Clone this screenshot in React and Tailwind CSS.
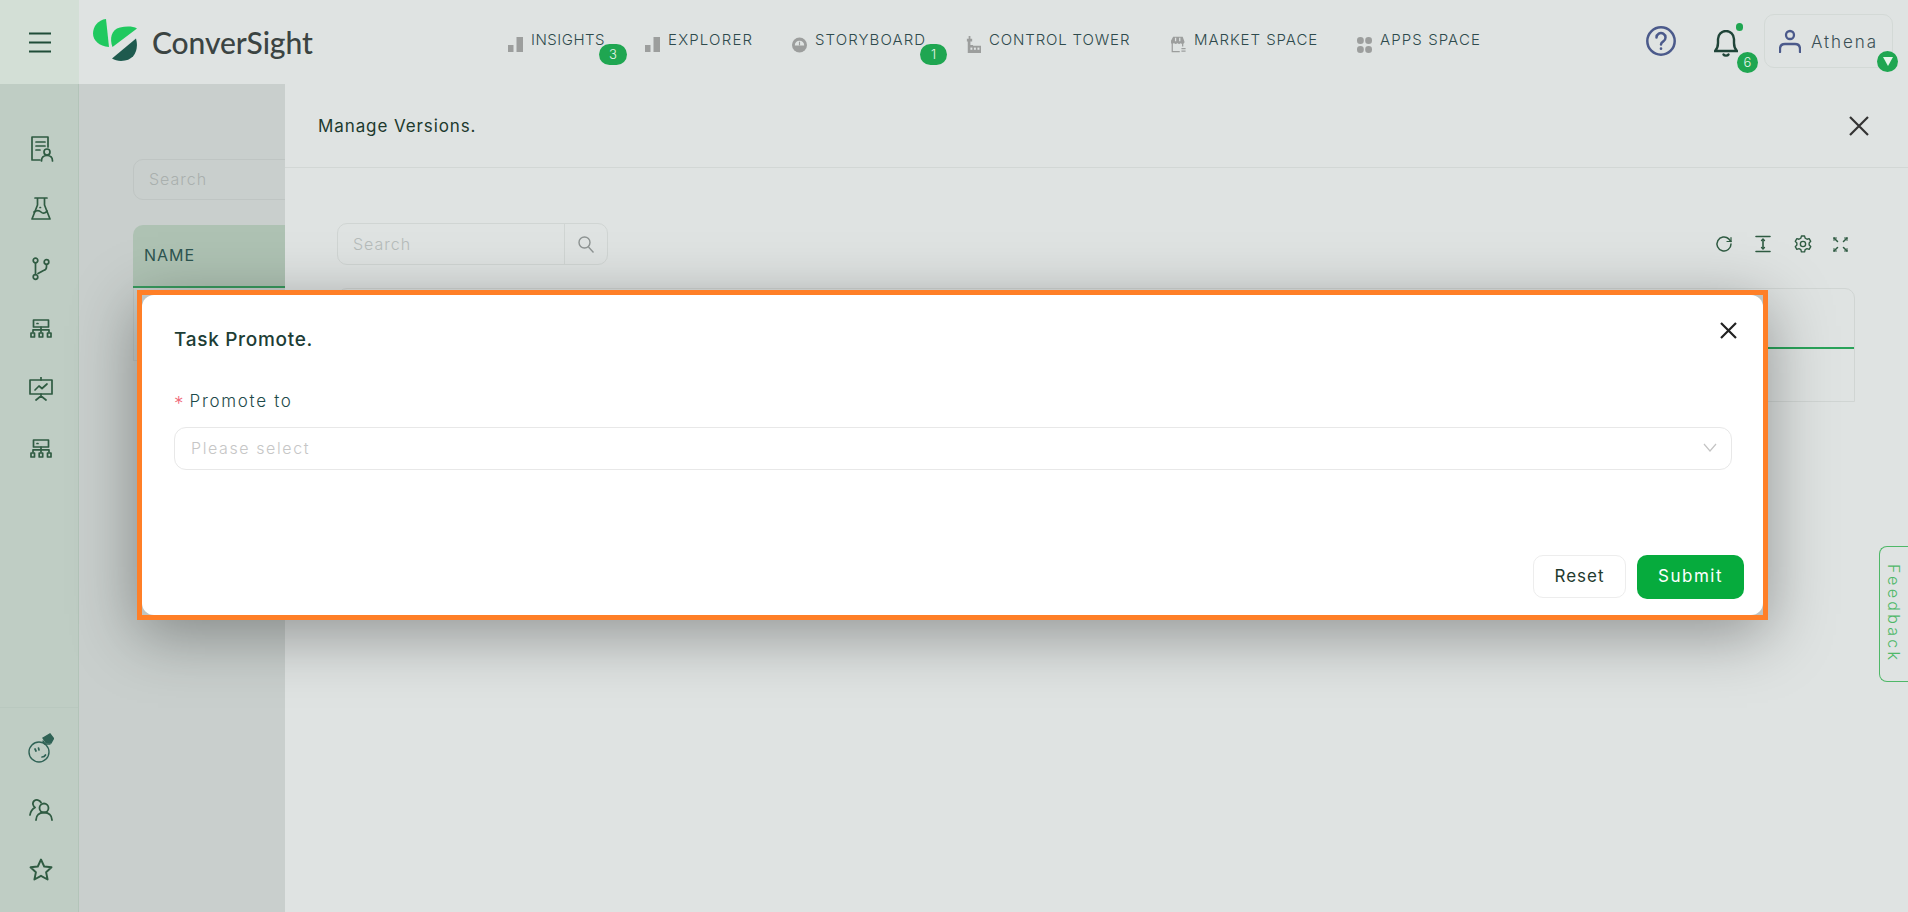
import React from "react";

const S = ({ w = 24, h = 24, vb = "0 0 24 24", sw = 1.8, c = "#2f5b42", children }) => (
  <svg width={w} height={h} viewBox={vb} fill="none" stroke={c} strokeWidth={sw} strokeLinecap="round" strokeLinejoin="round">
    {children}
  </svg>
);

const Bars = () => (
  <svg width="15" height="15" viewBox="0 0 15 15" fill="#9c9e9d"><rect x="0" y="8" width="5.500" height="7" /><rect x="8.500" y="0" width="6.500" height="15" /></svg>
);
const Gauge = () => (
  <svg width="16" height="17" viewBox="0 0 16 17" fill="#9c9e9d"><circle cx="8" cy="9" r="8" /><path d="M3 9.500a5 5 0 0 1 10 0z" fill="#dfe3e2" /><path d="M7.400 5.500h1.200v4H7.400z" /></svg>
);
const Factory = () => (
  <svg width="17" height="19" viewBox="0 0 17 19" fill="#9c9e9d"><path d="M1 3h2V0h2v3h2v3H5v4h3v1h9v8H2V6H1z" /><rect x="5" y="13" width="2.200" height="2.500" fill="#dfe3e2" /><rect x="9" y="13" width="2.200" height="2.500" fill="#dfe3e2" /><rect x="13" y="13" width="2.200" height="2.500" fill="#dfe3e2" /></svg>
);
const Store = () => (
  <svg width="18" height="19" viewBox="0 0 18 19" fill="none" stroke="#9c9e9d" strokeWidth="1.500"><path d="M1.500 7v11h9" /><path d="M14 8v4" /><path d="M3 1h10.500l2 5.500c-.5 2-3 2-3.800 0c-1 2-3 2-4 0c-1 2-3.200 2-4 0c-1 2-3.500 1.500-3.700 0z" fill="#9c9e9d" /><path d="M5.500 1.500v4M10.500 1.500v4" stroke="#dfe3e2" /><path d="M12.500 14.500h5M12.500 17.500h5" /></svg>
);
const Dots = () => (
  <svg width="15" height="16" viewBox="0 0 15 16" fill="#9c9e9d"><rect x="0" y="0" width="6.800" height="7" rx="3.300" /><rect x="8.200" y="0" width="6.800" height="7" rx="3.300" /><rect x="0" y="9" width="6.800" height="7" rx="3.300" /><rect x="8.200" y="9" width="6.800" height="7" rx="3.300" /></svg>
);

const Network = () => (
  <S w={22} h={20} vb="0 0 22 20" sw={1.7}>
    <rect x="3.500" y="1" width="15" height="7" /><path d="M7 4.500h1" /><path d="M11 8v5M3 13v-2.200h16V13" />
    <rect x="1" y="14" width="3.500" height="4" /><rect x="9.200" y="14" width="3.500" height="4" /><rect x="17.500" y="14" width="3.500" height="4" />
  </S>
);

const nav = [
  { icon: <Bars />, label: "INSIGHTS", w: "w-[74px]", t: "tracking-[0.5px]", badge: "3", pos: "left-[91px] w-[28px]" },
  { icon: <Bars />, label: "EXPLORER", w: "w-[84px]", t: "tracking-[1.2px]" },
  { icon: <Gauge />, label: "STORYBOARD", w: "w-[111px]", t: "tracking-[1.1px]", badge: "1", pos: "left-[128px] w-[27px]" },
  { icon: <Factory />, label: "CONTROL TOWER", w: "w-[142px]", t: "tracking-[0.85px]" },
  { icon: <Store />, label: "MARKET SPACE", w: "w-[123px]", t: "tracking-[0.95px]" },
  { icon: <Dots />, label: "APPS SPACE", w: "w-[98px]", t: "tracking-[1.1px]" },
];

const sideTop = [
  <S w={26} h={28} vb="0 0 26 28" sw={1.7}>
    <path d="M12 25H4V2h16v10" /><path d="M8 7h9M8 11h9M8 15h4" /><circle cx="19" cy="17" r="3" /><path d="M13.500 26c0-3.500 2-5.500 5.500-5.500s5.500 2 5.500 5.500" />
  </S>,
  <S w={22} h={24} vb="0 0 22 24" sw={1.7}>
    <path d="M5 1h12M7.500 1v7L2 22h18L14.500 8V1" /><path d="M4 15c3-2 5-2 7 0s5 1 6-1" /><path d="M10 10.500h.5" />
  </S>,
  <S w={20} h={24} vb="0 0 20 24" sw={1.7}>
    <circle cx="4.500" cy="3.500" r="2.300" /><circle cx="15.500" cy="5" r="2.300" /><circle cx="4.500" cy="20" r="2.300" /><path d="M4.500 6v11.500M15.500 7.500V10c0 2-1 3-3 3.500L7 16.500" />
  </S>,
  <Network />,
  <S w={24} h={24} vb="0 0 24 24" sw={1.7}>
    <path d="M12 0v3" /><rect x="1" y="3" width="22" height="14" /><path d="M6 13l4-4 3 2.500L18 7" /><path d="M12 17v2M7 23l5-4 5 4" />
  </S>,
  <Network />,
];

const sideBottom = [
  <svg width="26" height="30" viewBox="0 0 26 30" fill="none" stroke="#2f6255" strokeWidth="1.400" strokeLinecap="round">
    <circle cx="11" cy="19" r="10" /><path d="M7 16l1 2M10.500 15l.5 2M14 24c1.500 0 3-1 3.500-2" strokeWidth="1.700" />
    <path d="M15 5l7-4 3.500 4.500L23 10l-5-.5z" fill="#2f6255" /><path d="M15 8l2 3h5" />
  </svg>,
  <S w={24} h={24} vb="0 0 24 24" sw={1.8}>
    <circle cx="15" cy="11" r="4.500" /><path d="M7 23c0-5 3.500-7.500 8-7.500s8 2.500 8 7.500" /><path d="M12 5.500A4.500 4.500 0 0 0 5 4c-2 2-1 5 1 6.500C3.500 12 1.500 14 1 18" />
  </S>,
  <S w={24} h={23} vb="0 0 24 23" sw={1.9}>
    <path d="M12 1.500l3.200 7 7.300.8-5.400 5 1.500 7.200-6.600-3.700-6.600 3.700 1.500-7.200-5.400-5 7.300-.8z" />
  </S>,
];

const Pill = ({ className, children }) => (
  <span className={`absolute flex items-center justify-center rounded-full bg-[#1fa651] text-[13px] tracking-normal text-[#e6f5ea] font-['Inter',sans-serif] font-light ${className}`}>{children}</span>
);

export default function App() {
  return (
    <div className="relative flex h-[912px] w-[1908px] flex-col overflow-hidden bg-[#dfe3e2] font-['Inter',sans-serif] text-[#24463a]">
      {/* top bar */}
      <header className="flex h-[84px] shrink-0 items-stretch bg-[#dfe3e2]">
        <div className="flex w-[79px] items-center justify-center bg-[#d3dfd6]">
          <svg width="22" height="21" viewBox="0 0 22 21" stroke="#1f4d38" strokeWidth="2"><path d="M0 1.500h22M0 10.500h22M0 19.500h22" /></svg>
        </div>
        <div className="ml-[14px] flex w-[415px] items-start pt-[19px]">
          <svg width="45" height="42" viewBox="0 0 45 42">
            <path d="M13 0C5 1 0 7.500 0 14.500C0 21.500 6 27 16 28Z" fill="#20c95f" />
            <path d="M19.500 28C16.500 20 18 10.500 27 8.500C33 7 40 7 44 9.500Z" fill="#20c95f" />
            <path d="M43 19.500C46 30 42 42 28 42C24.500 42 21.500 41 19 39.500Z" fill="#1e5a4e" />
          </svg>
          <span className="ml-[14px] mt-[5px] font-['Lato',sans-serif] text-[30px] font-medium leading-[36px] tracking-[-0.1px] text-[#3b4442]">ConverSight</span>
        </div>
        <nav className="flex h-[84px] items-start gap-[40px] pt-[31px] text-[15px] font-light text-[#2e4a4c]">
          {nav.map((n) => (
            <div key={n.label} className="relative flex h-[18px] items-center gap-[8px]">
              <span className="mt-[9px] flex w-[15px] shrink-0 justify-center">{n.icon}</span>
              <span className={`${n.w} ${n.t} whitespace-nowrap leading-[18px]`}>{n.label}</span>
              {n.badge && <Pill className={`top-[13px] h-[21px] ${n.pos}`}>{n.badge}</Pill>}
            </div>
          ))}
        </nav>
        <div className="ml-auto flex items-start pr-[15px]">
          <div className="mt-[26px]">
            <svg width="30" height="30" viewBox="0 0 30 30" fill="none" stroke="#4b5a8b" strokeWidth="2.500" strokeLinecap="round">
              <circle cx="15" cy="15" r="13.700" /><path d="M10.500 11.500a4.500 4.500 0 1 1 6.800 3.900c-1.500.9-2.300 1.600-2.300 3.100" /><path d="M15 22.500v.3" strokeWidth="2.600" />
            </svg>
          </div>
          <div className="relative ml-[38px] mt-[30px] h-[28px] w-[24px]">
            <svg width="24" height="27" viewBox="0 0 24 27" fill="none" stroke="#1f4438" strokeWidth="2.400" strokeLinecap="round">
              <path d="M1 21h22c-2-2-3-4-3-8V9a8 8 0 0 0-16 0v4c0 4-1 6-3 8z" /><path d="M9.500 24.500c1 1.500 4 1.500 5 0" />
            </svg>
            <span className="absolute left-[22px] top-[-7px] h-[8px] w-[7px] rounded-full bg-[#1fa651]" />
            <Pill className="left-[23px] top-[22px] h-[21px] w-[21px]">6</Pill>
          </div>
          <div className="relative ml-[26px] mt-[14px] flex h-[54px] w-[129px] items-center rounded-[10px] border border-[#d3d9d6] pl-[14px]">
            <svg width="22" height="24" viewBox="0 0 22 24" fill="none" stroke="#4b5a8b" strokeWidth="2.300" strokeLinecap="round">
              <circle cx="11" cy="6" r="4" /><path d="M1 23v-3c0-3 2-5 5-5h10c3 0 5 2 5 5v3" />
            </svg>
            <span className="ml-[10px] mt-[3px] text-[17px] font-light tracking-[1.900px] text-[#3a4f55]">Athena</span>
            <span className="absolute left-[112px] top-[36px] flex h-[21px] w-[21px] items-center justify-center rounded-full bg-[#1fa651]">
              <svg width="10" height="9" viewBox="0 0 10 9" fill="#e6f5ea"><path d="M0 0h10L5 9z" /></svg>
            </span>
          </div>
        </div>
      </header>

      <div className="flex min-h-0 flex-1">
        {/* sidebar */}
        <aside className="flex w-[79px] shrink-0 flex-col justify-between border-r border-[#b3c4b9] bg-[#bfcdc4]">
          <div className="flex flex-col pt-[35px]">
            {sideTop.map((ic, i) => (
              <div key={i} className="flex h-[60px] items-center justify-center pl-[3px]">{ic}</div>
            ))}
          </div>
          <div className="flex flex-col border-t border-[#b9c8bf] pb-[12px] pt-[9px]">
            {sideBottom.map((ic, i) => (
              <div key={i} className="flex h-[61px] items-center justify-center pl-[3px]">{ic}</div>
            ))}
          </div>
        </aside>

        {/* page behind drawer */}
        <main className="relative flex-1 bg-[#c9cfcd] pl-[54px] pt-[75px]">
          <div className="flex h-[41px] w-[300px] items-center rounded-[10px] border border-[#bfc5c3] pb-[2px] pl-[15px] text-[16px] font-light tracking-[1px] text-[#a9b0ae]">Search</div>
          <div className="mt-[25px] w-[300px] overflow-hidden rounded-t-[10px]">
            <div className="flex h-[63px] items-center border-b-[2px] border-[#389a5e] bg-[#aec2b3] pb-[2px] pl-[11px] text-[16px] tracking-[1px] text-[#2d5550]">NAME</div>
            <div className="h-[73px] border-x border-b border-[#bfc5c3]" />
          </div>

          {/* drawer */}
          <section className="absolute inset-y-0 left-[206px] right-0 bg-[#dfe3e2]">
            <div className="flex h-[84px] items-center justify-between border-b border-[#d2d7d5] pl-[33px] pr-[39px]">
              <h2 className="pt-[2px] text-[17px] font-normal tracking-[0.9px] text-[#1d3a2e]">Manage Versions.</h2>
              <svg width="20" height="20" viewBox="0 0 20 20" stroke="#333" strokeWidth="2.200"><path d="M1 1l18 18M19 1L1 19" /></svg>
            </div>
            <div className="pl-[52px] pr-[53px] pt-[55px]">
              <div className="flex h-[42px] items-center justify-between">
                <div className="flex h-[42px] w-[271px] rounded-[10px] border border-[#d0d5d3]">
                  <span className="flex flex-1 items-center pb-[1px] pl-[15px] text-[16px] font-light tracking-[1px] text-[#b6bcba]">Search</span>
                  <span className="flex w-[43px] items-center justify-center border-l border-[#d0d5d3]">
                    <svg width="16" height="17" viewBox="0 0 16 17" fill="none" stroke="#8e9493" strokeWidth="1.400"><circle cx="6.500" cy="6.500" r="5.500" /><path d="M10.500 11l5 5.500" /></svg>
                  </span>
                </div>
                <div className="flex items-center gap-[21.5px] pr-[7px]">
                  <S w={18} h={18} vb="0 0 18 18" sw={1.5}><path d="M16 9a7 7 0 1 1-2.200-5.100L16 6.500" /><path d="M16 2.500v4h-4" strokeWidth={1.200} /></S>
                  <S w={18} h={18} vb="0 0 18 18" sw={1.600}><path d="M2 1.500h14M2 16.500h14M9 4.500v9" /><path d="M7.500 5.500L9 4l1.500 1.500M7.500 12.500L9 14l1.500-1.500" strokeWidth={1.300} /></S>
                  <S w={18} h={18} vb="0 0 17 17" sw={1.300}><path d="M7 1h3l.5 2 1.800 1 2-.6 1.500 2.600-1.500 1.500v1.900l1.500 1.500-1.500 2.600-2-.6-1.800 1-.5 2H7l-.5-2-1.800-1-2 .6L1.200 11l1.500-1.500V7.600L1.200 6l1.500-2.600 2 .6 1.800-1z" /><circle cx="8.500" cy="8.500" r="2.500" /></S>
                  <S w={15} h={15} vb="0 0 15 15" sw={1.500}><path d="M1 1l3.500 3.500M14 1l-3.500 3.500M1 14l3.500-3.500M14 14l-3.500-3.500" /><path d="M1 1h2.500M1 1v2.500M14 1h-2.500M14 1v2.500M1 14h2.500M1 14v-2.500M14 14h-2.500M14 14v-2.500" strokeWidth={1} /></S>
                </div>
              </div>
              <div className="mt-[23px] h-[114px] rounded-t-[10px] border border-[#d0d5d3]">
                <div className="h-[60px] border-b-[2px] border-[#2aa35a]" />
              </div>
            </div>
          </section>
        </main>
      </div>

      {/* feedback tab */}
      <div className="absolute right-0 top-[546px] flex h-[136px] w-[29px] items-center justify-center rounded-l-[8px] border border-r-0 border-[#4fb868] [writing-mode:vertical-rl] text-[16px] font-light tracking-[3.300px] text-[#4fb868]">Feedback</div>

      {/* task promote dialog */}
      <div className="absolute left-[137px] top-[290px] h-[330px] w-[1631px] border-[5px] border-[#ff7f27] bg-[#bfc4c2] shadow-[0_15px_60px_rgba(0,0,0,0.35)]">
        <div className="relative flex h-full flex-col rounded-[12px] bg-white pl-[32px] pr-[31px] pt-[33px]">
          <h3 className="h-[24px] text-[19px] font-medium leading-[24px] tracking-[0.7px] text-[#1d3d35]">Task Promote.</h3>
          <button className="absolute right-[26px] top-[27px]" aria-label="Close">
            <svg width="17" height="17" viewBox="0 0 17 17" stroke="#222" strokeWidth="2.200"><path d="M1 1l15 15M16 1L1 16" /></svg>
          </button>
          <label className="mt-[38px] flex h-[24px] items-center text-[17px] font-light tracking-[1.700px] text-[#1d4a4a]">
            <span className="mr-[6px] mt-[4px] text-[19px] tracking-normal text-[#f06a7a]">*</span>Promote to
          </label>
          <div className="mt-[13px] flex h-[43px] items-center justify-between rounded-[12px] border border-[#e8e8e8] pb-[2px] pl-[16px] pr-[14px] text-[16px] font-light tracking-[1.600px] text-[#c6c6c6]">
            Please select
            <svg width="14" height="9" viewBox="0 0 14 9" fill="none" stroke="#c4c4c4" strokeWidth="1.200"><path d="M1 1l6 7 6-7" /></svg>
          </div>
          <div className="-mr-[12px] mt-[85px] flex items-start justify-end gap-[11px]">
            <button className="h-[43px] w-[93px] rounded-[10px] border border-[#ededed] bg-white text-[17px] font-normal tracking-[1px] text-[#1f3a2e]">Reset</button>
            <button className="h-[44px] w-[107px] rounded-[10px] bg-[#06ab3d] text-[17px] font-normal tracking-[1.500px] text-white">Submit</button>
          </div>
        </div>
      </div>
    </div>
  );
}
